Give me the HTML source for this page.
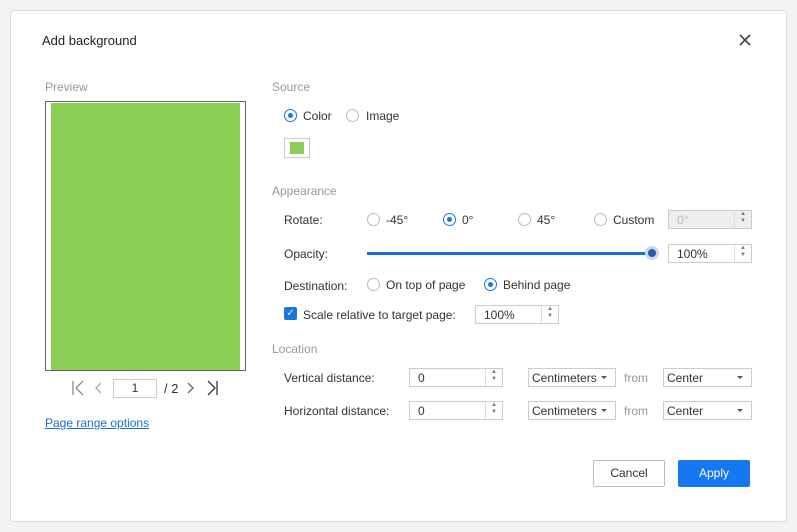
<!DOCTYPE html>
<html><head><style>
body{margin:0;width:797px;height:532px;background:#f3f3f3;font-family:"Liberation Sans",sans-serif;font-size:12px;color:#333;position:relative;overflow:hidden}
.dlg{position:absolute;left:10px;top:10px;width:775px;height:510px;background:#fff;border:1px solid #d8dde3;border-radius:4px}
.a{position:absolute;white-space:nowrap}
.g{color:#999}
.r{position:absolute;width:11px;height:11px;border:1px solid #bbb;border-radius:50%;background:#fff}
.r.on{border-color:#1677e5}
.r.on:after{content:"";position:absolute;left:3px;top:3px;width:5px;height:5px;border-radius:50%;background:#1677e5}
.in{position:absolute;border:1px solid #ccc;background:#fff;height:17px;box-sizing:border-box;padding:2px 0 0 8px}
.sp{position:absolute;right:0;top:0;width:16px;height:100%;border-left:1px solid #ddd;font-size:6px;color:#777;text-align:center;line-height:7px}
.sel{position:absolute;border:1px solid #ccc;height:17px;box-sizing:border-box;padding:2px 0 0 3px}
.sel:after{content:"";position:absolute;right:8px;top:7px;border:3px solid transparent;border-top:3px solid #555}
</style></head><body>
<div class="dlg"></div>
<div class="a" style="left:42px;top:33px;font-size:13px;color:#222">Add background</div>
<svg class="a" style="left:739px;top:34px" width="12" height="12"><path d="M1 1L11 11M11 1L1 11" stroke="#444" stroke-width="1.6"/></svg>
<div class="a g" style="left:45px;top:80px">Preview</div>
<div class="a" style="left:45px;top:101px;width:199px;height:268px;border:1px solid #666;background:#fff"></div>
<div class="a" style="left:51px;top:103px;width:189px;height:267px;background:#8bcf57"></div>
<svg class="a" style="left:70px;top:380px" width="150" height="16">
<path d="M3 1V15M13 1L6 8L13 15" stroke="#888" stroke-width="1.3" fill="none"/>
<path d="M31 3L26 8L31 13" stroke="#aaa" stroke-width="1.3" fill="none"/>
<path d="M118 3L123 8L118 13" stroke="#666" stroke-width="1.3" fill="none"/>
<path d="M138 1L145 8L138 15M147 1V15" stroke="#333" stroke-width="1.3" fill="none"/>
</svg>
<div class="a" style="left:113px;top:379px;width:42px;height:17px;border:1px solid #ccc;text-align:center;line-height:17px">1</div>
<div class="a" style="left:164px;top:381px;font-size:13px">/ 2</div>
<div class="a" style="left:45px;top:416px;color:#1a6fd0;text-decoration:underline">Page range options</div>

<div class="a g" style="left:272px;top:80px">Source</div>
<div class="r on" style="left:284px;top:109px"></div><div class="a" style="left:303px;top:109px">Color</div>
<div class="r" style="left:346px;top:109px"></div><div class="a" style="left:366px;top:109px">Image</div>
<div class="a" style="left:284px;top:138px;width:24px;height:18px;border:1px solid #ccc"><div style="margin:3px 5px;height:12px;background:#8bcf57"></div></div>

<div class="a g" style="left:272px;top:184px">Appearance</div>
<div class="a" style="left:284px;top:213px">Rotate:</div>
<div class="r" style="left:367px;top:213px"></div><div class="a" style="left:386px;top:213px">-45°</div>
<div class="r on" style="left:443px;top:213px"></div><div class="a" style="left:462px;top:213px">0°</div>
<div class="r" style="left:518px;top:213px"></div><div class="a" style="left:537px;top:213px">45°</div>
<div class="r" style="left:594px;top:213px"></div><div class="a" style="left:613px;top:213px">Custom</div>
<div class="in" style="left:668px;top:210px;width:84px;height:19px;background:#eee;color:#bbb">0°<div class="sp">▲<br>▼</div></div>
<div class="a" style="left:284px;top:247px">Opacity:</div>
<div class="a" style="left:367px;top:252px;width:285px;height:3px;background:#1a6fd0"></div>
<div class="a" style="left:645px;top:246px;width:14px;height:14px;border-radius:50%;background:#c9d8ef"></div>
<div class="a" style="left:648px;top:249px;width:8px;height:8px;border-radius:50%;background:#2b5caa"></div>
<div class="in" style="left:668px;top:244px;width:84px;height:19px">100%<div class="sp">▲<br>▼</div></div>
<div class="a" style="left:284px;top:279px">Destination:</div>
<div class="r" style="left:367px;top:278px"></div><div class="a" style="left:386px;top:278px">On top of page</div>
<div class="r on" style="left:484px;top:278px"></div><div class="a" style="left:503px;top:278px">Behind page</div>
<div class="a" style="left:284px;top:307px;width:13px;height:13px;background:#1677e5;border-radius:2px;color:#fff;font-size:10px;text-align:center;line-height:13px">✓</div>
<div class="a" style="left:303px;top:308px">Scale relative to target page:</div>
<div class="in" style="left:475px;top:305px;width:84px;height:19px">100%<div class="sp">▲<br>▼</div></div>

<div class="a g" style="left:272px;top:342px">Location</div>
<div class="a" style="left:284px;top:371px">Vertical distance:</div>
<div class="in" style="left:409px;top:368px;width:94px;height:19px">0<div class="sp">▲<br>▼</div></div>
<div class="sel" style="left:528px;top:368px;width:88px;height:19px">Centimeters</div>
<div class="a g" style="left:624px;top:371px">from</div>
<div class="sel" style="left:663px;top:368px;width:89px;height:19px">Center</div>
<div class="a" style="left:284px;top:404px">Horizontal distance:</div>
<div class="in" style="left:409px;top:401px;width:94px;height:19px">0<div class="sp">▲<br>▼</div></div>
<div class="sel" style="left:528px;top:401px;width:88px;height:19px">Centimeters</div>
<div class="a g" style="left:624px;top:404px">from</div>
<div class="sel" style="left:663px;top:401px;width:89px;height:19px">Center</div>

<div class="a" style="left:593px;top:460px;width:70px;height:25px;border:1px solid #bbb;border-radius:2px;text-align:center;line-height:25px">Cancel</div>
<div class="a" style="left:678px;top:460px;width:70px;height:25px;background:#1677f0;border:1px solid #1677f0;border-radius:2px;color:#fff;text-align:center;line-height:25px">Apply</div>
</body></html>
